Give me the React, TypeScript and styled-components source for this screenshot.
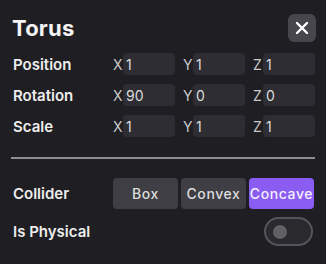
import React from "react";
import styled, { createGlobalStyle } from "styled-components";

const Global = createGlobalStyle`
  html, body { margin: 0; padding: 0; background: #1f1e23; }
  body { font-family: Inter, "Noto Sans", sans-serif; }
`;

const Panel = styled.div`
  width: 326px;
  height: 264px;
  box-sizing: border-box;
  background: #1f1e23;
  padding: 14px 11px 0 12px;
  display: flex;
  flex-direction: column;
  color: #f2f2f2;
`;

const Header = styled.div`
  display: flex;
  align-items: center;
  justify-content: space-between;
  height: 28px;
  margin-bottom: 11px;
`;

const Title = styled.h1`
  margin: 0;
  font-size: 22px;
  font-weight: 700;
  color: #f4f4f4;
  letter-spacing: 0.2px;
`;

const CloseButton = styled.button`
  width: 28px;
  height: 28px;
  border: none;
  border-radius: 6px;
  background: #47464c;
  display: flex;
  align-items: center;
  justify-content: center;
  padding: 0;
  margin-right: -1px;
`;

const Rows = styled.div`
  display: flex;
  flex-direction: column;
  gap: 9px;
`;

const Row = styled.div`
  display: grid;
  grid-template-columns: 101px 1fr;
  align-items: center;
  height: 22px;
`;

const Label = styled.span`
  font-size: 15px;
  font-weight: 600;
  color: #ededed;
  padding-left: 1px;
`;

const Axes = styled.div`
  display: flex;
  gap: 8px;
`;

const Axis = styled.label`
  display: flex;
  align-items: center;
  gap: 1px;
`;

const AxisName = styled.span`
  width: 9px;
  font-size: 14px;
  color: #c8c8c8;
`;

const Field = styled.div`
  width: 52px;
  height: 22px;
  box-sizing: border-box;
  border-radius: 4px;
  background: #2e2d33;
  color: #dcdcdc;
  font-size: 14px;
  display: flex;
  align-items: center;
  padding-left: 3px;
`;

const Divider = styled.hr`
  border: none;
  height: 2px;
  background: #8e8e90;
  margin: 20px 0 19px -1px;
`;

const ColliderRow = styled.div`
  display: grid;
  grid-template-columns: 101px 1fr;
  align-items: center;
  height: 31px;
`;

const Segments = styled.div`
  display: flex;
  gap: 3px;
  margin-right: 1px;
`;

const Segment = styled.button<{ $active?: boolean }>`
  flex: 1;
  height: 31px;
  border: none;
  border-radius: 4px;
  background: ${(p) => (p.$active ? "#8b5cf1" : "#3f3e44")};
  color: ${(p) => (p.$active ? "#f4f0ff" : "#dddddd")};
  font-family: Inter, "Noto Sans", sans-serif;
  font-size: 14px;
  font-weight: 500;
  letter-spacing: 0.6px;
  padding: 0;
`;

const PhysRow = styled.div`
  display: flex;
  align-items: center;
  justify-content: space-between;
  margin-top: 8px;
  height: 29px;
`;

const Toggle = styled.div`
  width: 49px;
  height: 29px;
  box-sizing: border-box;
  border-radius: 15px;
  border: 2px solid #55545a;
  background: #2a292e;
  display: flex;
  align-items: center;
  padding-left: 7px;
  margin-right: 2px;
`;

const Knob = styled.div`
  width: 14px;
  height: 14px;
  border-radius: 50%;
  background: #606065;
`;

const vectors: { label: string; values: string[] }[] = [
  { label: "Position", values: ["1", "1", "1"] },
  { label: "Rotation", values: ["90", "0", "0"] },
  { label: "Scale", values: ["1", "1", "1"] },
];

export default function App() {
  return (
    <>
      <Global />
      <Panel>
        <Header>
          <Title>Torus</Title>
          <CloseButton aria-label="Close">
            <svg width="14" height="14" viewBox="0 0 14 14">
              <path d="M2 2 L12 12 M12 2 L2 12" stroke="#ffffff" strokeWidth="2.4" strokeLinecap="round" />
            </svg>
          </CloseButton>
        </Header>
        <Rows>
          {vectors.map((v) => (
            <Row key={v.label}>
              <Label>{v.label}</Label>
              <Axes>
                {["X", "Y", "Z"].map((a, i) => (
                  <Axis key={a}>
                    <AxisName>{a}</AxisName>
                    <Field>{v.values[i]}</Field>
                  </Axis>
                ))}
              </Axes>
            </Row>
          ))}
        </Rows>
        <Divider />
        <ColliderRow>
          <Label>Collider</Label>
          <Segments>
            <Segment>Box</Segment>
            <Segment>Convex</Segment>
            <Segment $active>Concave</Segment>
          </Segments>
        </ColliderRow>
        <PhysRow>
          <Label>Is Physical</Label>
          <Toggle>
            <Knob />
          </Toggle>
        </PhysRow>
      </Panel>
    </>
  );
}
